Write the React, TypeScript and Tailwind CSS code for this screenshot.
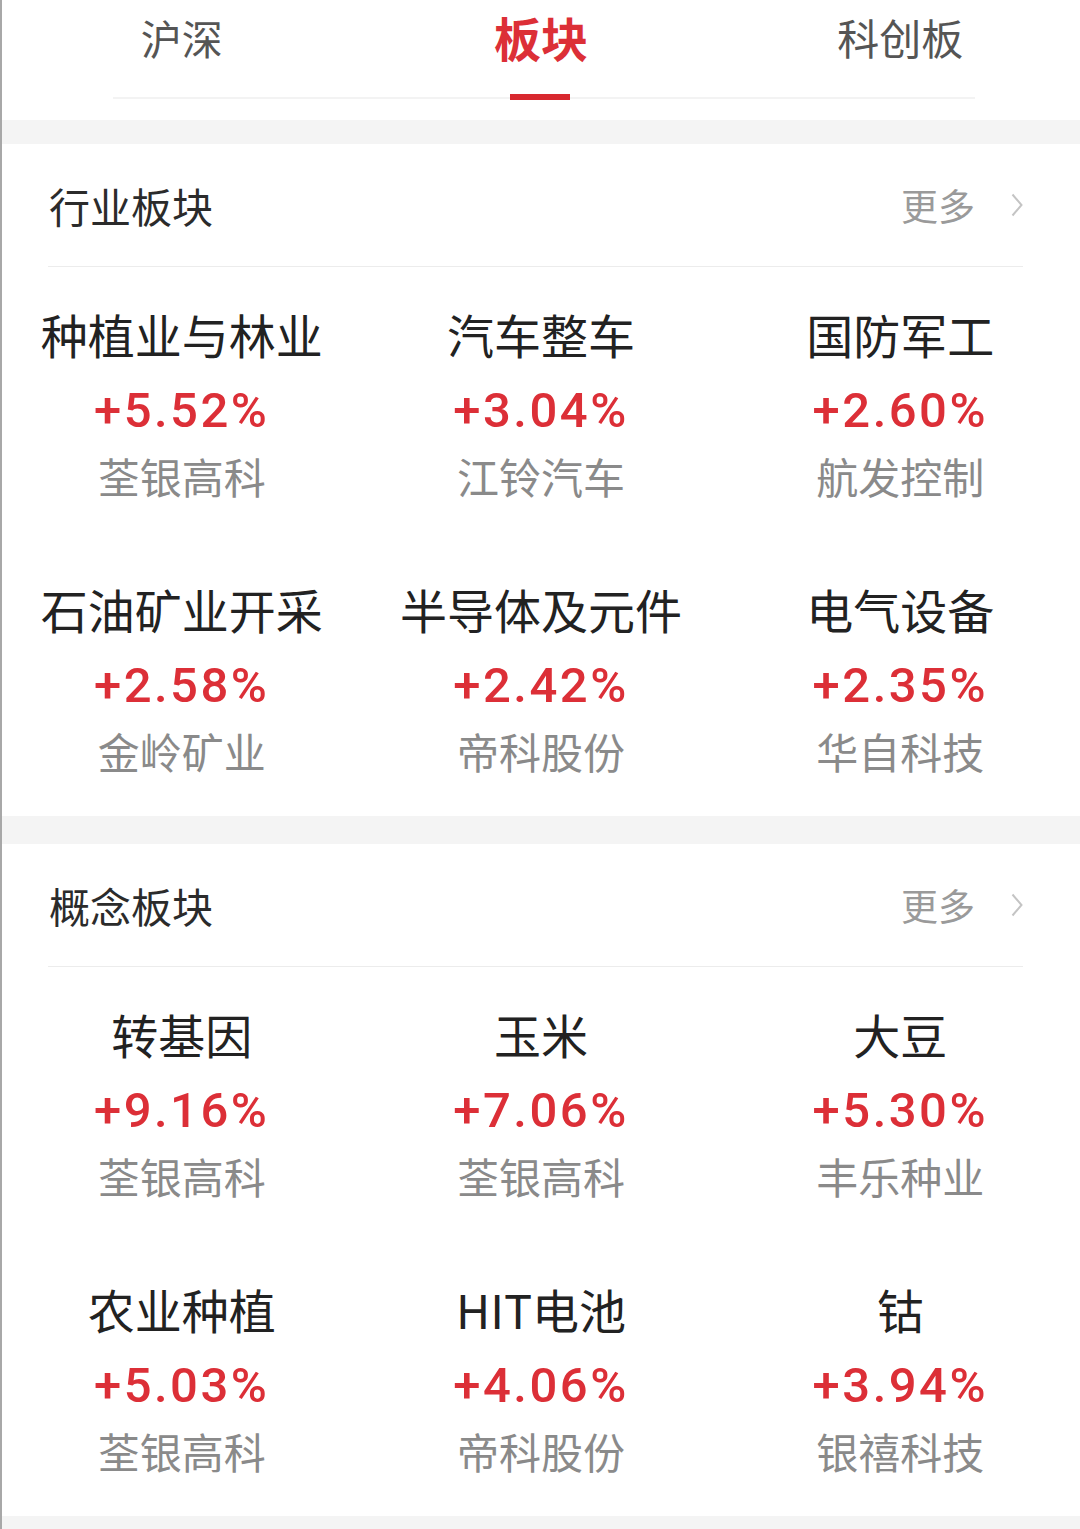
import React from 'react';

type Item = { name: string; pct: string; stock: string };

const industry: Item[] = [
  { name: '种植业与林业', pct: '+5.52%', stock: '荃银高科' },
  { name: '汽车整车', pct: '+3.04%', stock: '江铃汽车' },
  { name: '国防军工', pct: '+2.60%', stock: '航发控制' },
  { name: '石油矿业开采', pct: '+2.58%', stock: '金岭矿业' },
  { name: '半导体及元件', pct: '+2.42%', stock: '帝科股份' },
  { name: '电气设备', pct: '+2.35%', stock: '华自科技' },
];

const concept: Item[] = [
  { name: '转基因', pct: '+9.16%', stock: '荃银高科' },
  { name: '玉米', pct: '+7.06%', stock: '荃银高科' },
  { name: '大豆', pct: '+5.30%', stock: '丰乐种业' },
  { name: '农业种植', pct: '+5.03%', stock: '荃银高科' },
  { name: 'HIT电池', pct: '+4.06%', stock: '帝科股份' },
  { name: '钴', pct: '+3.94%', stock: '银禧科技' },
];

const cjk = "font-['Noto_Sans_CJK_SC','Noto_Sans',sans-serif]";

const SectionHeader = ({ title }: { title: string }) => (
  <div className="ml-[46px] mr-[57px] flex items-center justify-between pt-[41px] pb-[41px] border-b border-[#ececec]">
    <span className={`${cjk} text-[41px] leading-[40px] text-[#2b2b2b] pl-[1px]`}>{title}</span>
    <div className="flex items-center gap-[36px]">
      <span className={`${cjk} text-[37px] leading-[40px] text-[#9a9a9a]`}>更多</span>
      <svg width="12" height="24" viewBox="0 0 12 24" fill="none">
        <polyline points="1.5,1.5 10.5,12 1.5,22.5" stroke="#c4c4c4" strokeWidth="2" />
      </svg>
    </div>
  </div>
);

const Grid = ({ items }: { items: Item[] }) => (
  <div className="grid grid-cols-3 gap-y-[75px] pt-[32px] pb-[42px]">
    {items.map((it) => (
      <div key={it.name} className="flex flex-col items-center">
        <span className={`${cjk} text-[47px] leading-[70px] text-[#222]`}>{it.name}</span>
        <span className="font-['Roboto',sans-serif] font-medium text-[49px] leading-[84px] tracking-[2.5px] text-[#dc2f37]">
          {it.pct}
        </span>
        <span className={`${cjk} text-[42px] leading-[46px] text-[#8a8a8a]`}>{it.stock}</span>
      </div>
    ))}
  </div>
);

const App = () => {
  return (
    <div className="w-[1080px] h-[1529px] bg-white border-l-2 border-[#a8a8a8] overflow-hidden flex flex-col">
      {/* tabs */}
      <div className="relative h-[120px]">
        <div className="grid grid-cols-3 pt-[9px]">
          <div className={`${cjk} text-center text-[41px] leading-[56px] text-[#555]`}>沪深</div>
          <div className={`${cjk} text-center text-[47px] leading-[56px] font-bold text-[#dc2f37]`}>板块</div>
          <div className={`${cjk} text-center text-[42px] leading-[56px] text-[#555]`}>科创板</div>
        </div>
        <div className="absolute left-[111px] right-[105px] top-[97px] h-[2px] bg-[#f3f3f3]" />
        <div className="absolute left-[508px] top-[94px] w-[60px] h-[6px] bg-[#d8282f]" />
      </div>
      <div className="h-[24px] bg-[#f4f4f4]" />

      <SectionHeader title="行业板块" />
      <Grid items={industry} />

      <div className="h-[28px] bg-[#f4f4f4]" />

      <SectionHeader title="概念板块" />
      <Grid items={concept} />

      <div className="flex-1 bg-[#f4f4f4]" />
    </div>
  );
};

export default App;
